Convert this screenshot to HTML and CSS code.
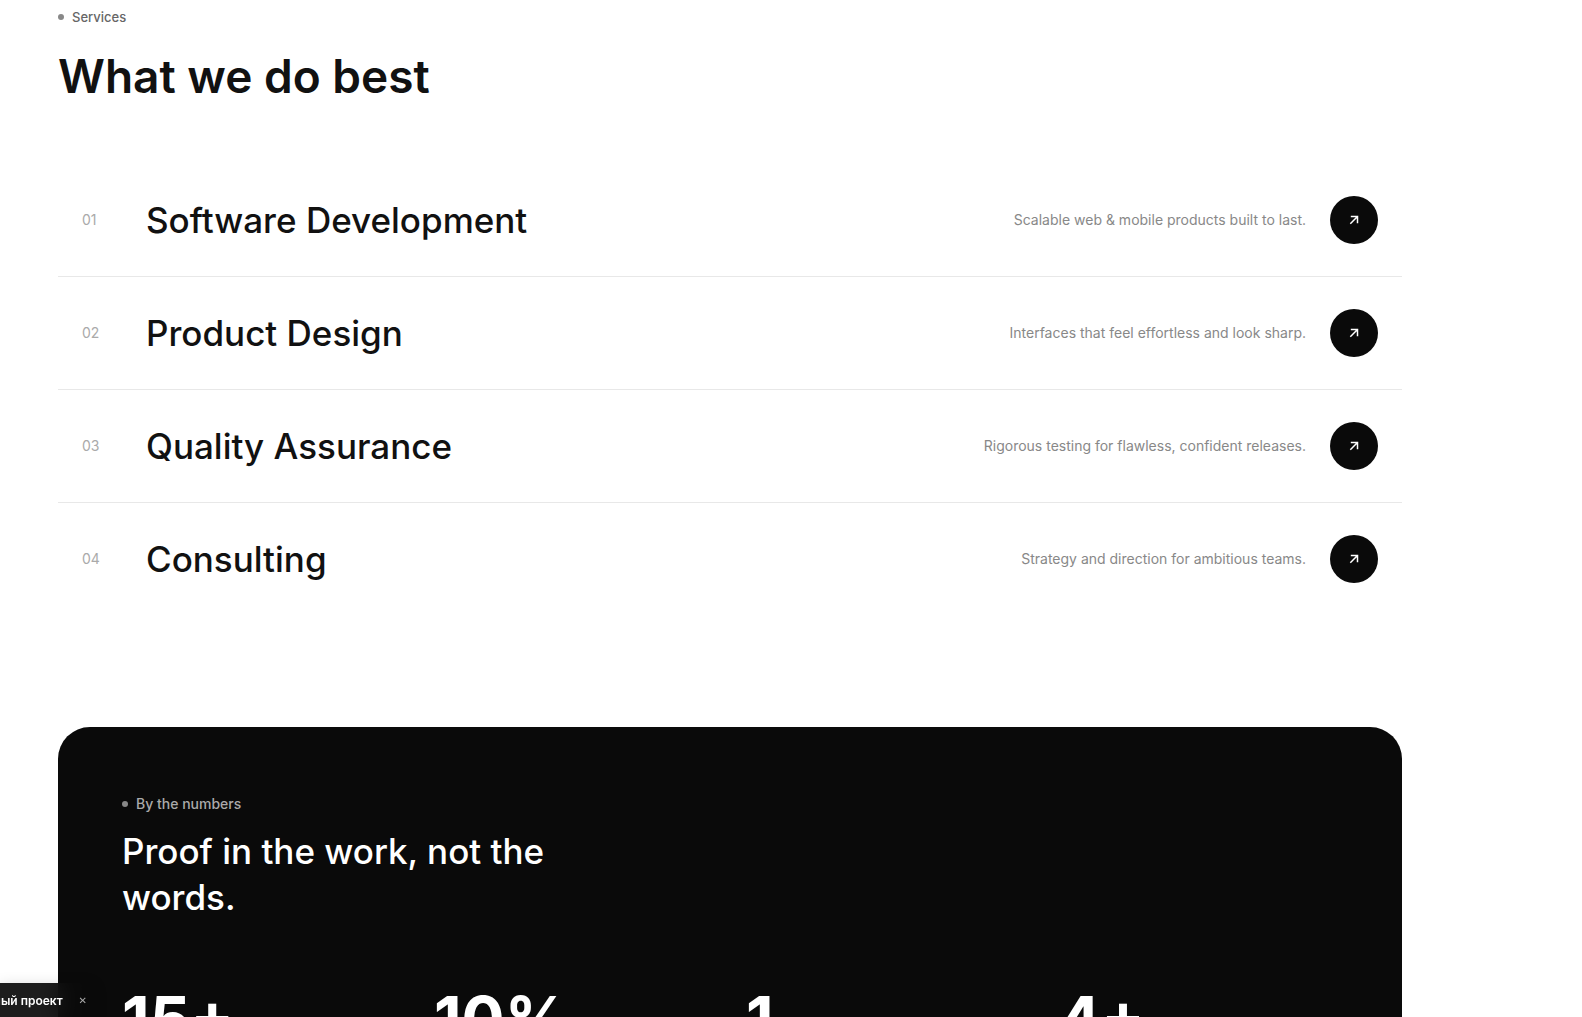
FILE: index.html
```html
<!DOCTYPE html>
<html lang="en">
<head>
<meta charset="utf-8">
<meta name="viewport" content="width=device-width, initial-scale=1">
<title>Services</title>
<link rel="stylesheet" href="styles.css">
</head>
<body>
<svg class="sprite" aria-hidden="true">
  <symbol id="arrow" viewBox="0 0 16 16"><path d="M4.3 11.7 11.5 4.5M4.8 4.5h6.7v6.7" fill="none" stroke="currentColor" stroke-width="1.5"/></symbol>
</svg>
<main class="page">
  <section class="services">
    <p class="eyebrow">Services</p>
    <h1 class="title">What we do best</h1>
    <ul class="list">
      <li class="row">
        <span class="index">01</span>
        <h2 class="name">Software Development</h2>
        <p class="note">Scalable web &amp; mobile products built to last.</p>
        <a class="go" href="#software" aria-label="Software Development"><svg class="icon"><use href="#arrow"/></svg></a>
      </li>
      <li class="row">
        <span class="index">02</span>
        <h2 class="name">Product Design</h2>
        <p class="note">Interfaces that feel effortless and look sharp.</p>
        <a class="go" href="#design" aria-label="Product Design"><svg class="icon"><use href="#arrow"/></svg></a>
      </li>
      <li class="row">
        <span class="index">03</span>
        <h2 class="name">Quality Assurance</h2>
        <p class="note">Rigorous testing for flawless, confident releases.</p>
        <a class="go" href="#quality" aria-label="Quality Assurance"><svg class="icon"><use href="#arrow"/></svg></a>
      </li>
      <li class="row">
        <span class="index">04</span>
        <h2 class="name">Consulting</h2>
        <p class="note">Strategy and direction for ambitious teams.</p>
        <a class="go" href="#consulting" aria-label="Consulting"><svg class="icon"><use href="#arrow"/></svg></a>
      </li>
    </ul>
  </section>
  <section class="numbers">
    <p class="eyebrow eyebrow-light">By the numbers</p>
    <h2 class="claim">Proof in the work, not the words.</h2>
    <div class="stats">
      <strong class="stat">15+</strong>
      <strong class="stat">10%</strong>
      <strong class="stat">1</strong>
      <strong class="stat">4+</strong>
    </div>
  </section>
</main>
<aside class="toast" lang="ru">
  <span>ный проект</span>
  <button class="close" type="button" aria-label="Close">✕</button>
</aside>
</body>
</html>
```
FILE: styles.css
```css
* {
  box-sizing: border-box;
  margin: 0;
  padding: 0;
}

body {
  background: #fff;
  color: #111;
  font-family: Inter, "Liberation Sans", sans-serif;
  font-weight: 500;
}

.sprite {
  display: none;
}

.page {
  display: flex;
  flex-direction: column;
  gap: 112px;
  height: 100vh;
  padding: 7px 180px 0 58px;
  overflow: hidden;
}

.eyebrow {
  display: flex;
  align-items: center;
  gap: 8px;
  color: #666;
  font-size: 13px;
  line-height: 20px;
}

.eyebrow::before {
  content: "";
  width: 6px;
  height: 6px;
  border-radius: 50%;
  background: #888;
}

.title {
  margin-top: 20px;
  font-size: 46px;
  font-weight: 600;
  line-height: 58px;
}

.list {
  margin-top: 59px;
  list-style: none;
}

.row {
  display: flex;
  align-items: center;
  gap: 24px;
  padding: 32px 24px;
}

.row + .row {
  border-top: 1px solid #e8e8e8;
}

.index {
  width: 40px;
  color: #aaa;
  font-size: 14px;
  font-weight: 400;
  line-height: 20px;
}

.name {
  flex: 1;
  font-size: 35px;
  font-weight: 500;
  line-height: 44px;
}

.note {
  color: #888;
  font-size: 14px;
  font-weight: 400;
  line-height: 20px;
}

.go {
  display: flex;
  align-items: center;
  justify-content: center;
  width: 48px;
  height: 48px;
  border-radius: 50%;
  background: #0a0a0a;
  color: #fff;
}

.icon {
  width: 16px;
  height: 16px;
}

.numbers {
  flex: none;
  padding: 67px 64px 64px;
  border-radius: 32px;
  background: #0a0a0a;
  color: #fff;
}

.eyebrow-light {
  color: #aaa;
  font-size: 14px;
}

.claim {
  max-width: 480px;
  margin-top: 14px;
  font-size: 35px;
  font-weight: 500;
  line-height: 46px;
}

.stats {
  display: grid;
  grid-template-columns: repeat(4, 1fr);
  gap: 32px;
  margin-top: 68px;
}

.stat {
  font-size: 64px;
  font-weight: 700;
  line-height: 64px;
}

.toast {
  position: fixed;
  bottom: 0;
  left: 0;
  display: flex;
  gap: 16px;
  align-items: center;
  justify-content: flex-end;
  width: 92px;
  height: 34px;
  padding: 2px 5px 0 0;
  background: rgba(10, 10, 10, 0.92);
  box-shadow: 0 4px 16px rgba(0, 0, 0, 0.2);
  backdrop-filter: blur(12px);
  color: #fff;
  font-size: 12px;
  font-weight: 600;
  line-height: 16px;
  white-space: nowrap;
}

.close {
  border: 0;
  background: none;
  color: #aaa;
  font: 700 10px/16px "DejaVu Sans", sans-serif;
}
```
